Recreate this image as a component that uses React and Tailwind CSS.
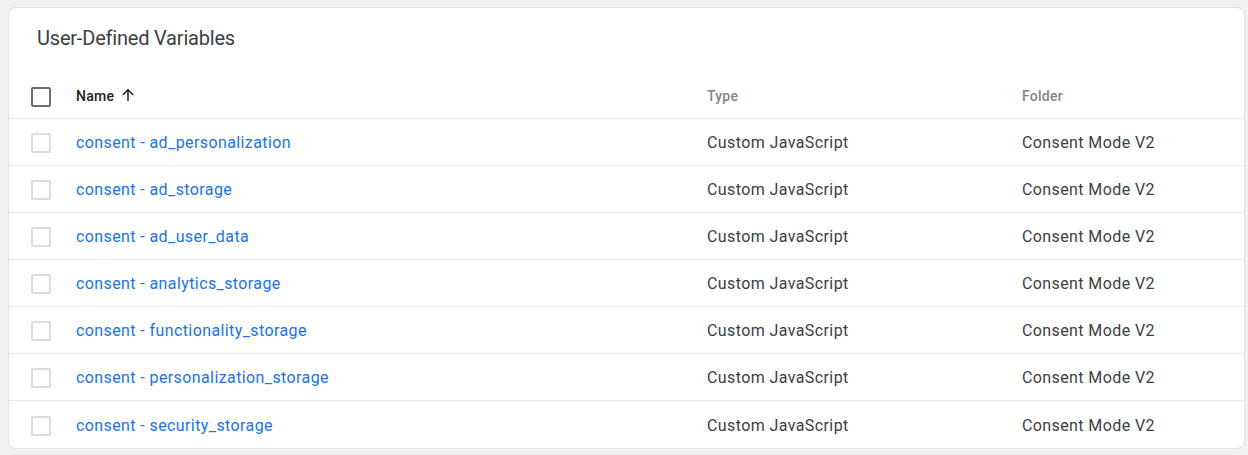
import React from "react";

const rows = [
  "consent - ad_personalization",
  "consent - ad_storage",
  "consent - ad_user_data",
  "consent - analytics_storage",
  "consent - functionality_storage",
  "consent - personalization_storage",
  "consent - security_storage",
];

function Box({ dark }) {
  return (
    <div
      className={
        dark
          ? "w-[20px] h-[20px] rounded-[2px] border-2 border-[#6b6e72]"
          : "w-[20px] h-[20px] rounded-[2px] border-2 border-[#dcdcdc]"
      }
    />
  );
}

export default function App() {
  return (
    <div
      className="w-[1248px] h-[455px] bg-[#f1f1f1] pt-[7px] pl-[8px] overflow-hidden"
      style={{ fontFamily: "Roboto, 'Liberation Sans', sans-serif" }}
    >
      <div className="w-[1237px] h-[442px] bg-white rounded-[8px] border border-[#e3e3e3] overflow-hidden">
        <div className="h-[64px] pl-[28px] pt-[17px] text-[20px] leading-[26px] tracking-[-0.2px] text-[#3c4043]">
          User-Defined Variables
        </div>
        <div className="grid grid-cols-[67px_631px_315px_1fr] h-[47px] pt-[3px] items-center border-b border-[#e8eaed] text-[14px] tracking-[0.25px] font-medium">
          <div className="pl-[22px]">
            <Box dark />
          </div>
          <div className="flex items-center gap-[5px] text-[#202124]">
            Name
            <svg width="18" height="18" viewBox="0 0 24 24" className="-mt-[3px]">
              <path d="M12 20V5M5 12l7-7 7 7" fill="none" stroke="#202124" strokeWidth="2" />
            </svg>
          </div>
          <div className="text-[#80868b]">Type</div>
          <div className="text-[#80868b]">Folder</div>
        </div>
        {rows.map((r, i) => (
          <div
            key={r}
            className={
              "grid grid-cols-[67px_631px_315px_1fr] h-[47px] pt-[2px] items-center text-[16px] tracking-[0.4px] " +
              (i < rows.length - 1 ? "border-b border-[#e8eaed]" : "")
            }
          >
            <div className="pl-[22px]">
              <Box />
            </div>
            <div className="text-[#1a73e8]">{r}</div>
            <div className="text-[#3c4043]">Custom JavaScript</div>
            <div className="text-[#3c4043]">Consent Mode V2</div>
          </div>
        ))}
      </div>
    </div>
  );
}
